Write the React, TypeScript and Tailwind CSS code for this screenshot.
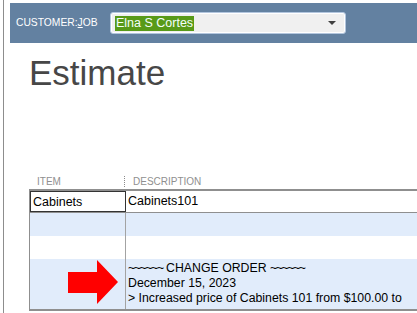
import React from 'react'

export default function App() {
  return (
    <div className="w-[417px] h-[313px] bg-white overflow-hidden font-['Liberation_Sans',Arial,sans-serif]">
      <div className="relative ml-[3px] h-full border-l border-[#8d8d8d] pt-[3px] pl-[6px]">
        {/* customer:job bar */}
        <div className="flex h-[40px] items-center bg-[#6381a1] pl-[6px]">
          <div className="w-[94px] shrink-0 text-[10.3px] text-white">
            CUSTOMER:<span className="underline">J</span>OB
          </div>
          <div className="flex h-[22px] w-[236px] items-center rounded-[3px] border border-[#b3c6de] bg-[#f0f0f0] pl-[4px] shadow-[inset_0_0_0_1px_#ffffff]">
            <span className="bg-[#589a18] px-[1px] text-[12.5px] leading-[15px] text-[#f4fffb]">Elna S Cortes</span>
            <span className="ml-auto mr-[9px] h-0 w-0 border-x-[4px] border-t-[4px] border-x-transparent border-t-[#404040]" />
          </div>
        </div>

        {/* title */}
        <h1 className="mt-[12px] pl-[19px] text-[35px] leading-none text-[#474747]">Estimate</h1>

        {/* column headers */}
        <div className="mt-[83px] flex h-[16px] items-center pl-[19px] text-[10px] text-[#8f8f8f]">
          <div className="w-[95px] pl-[8px]">ITEM</div>
          <div className="h-[11px] border-l border-dotted border-[#8a8a8a]" />
          <div className="pl-[8px]">DESCRIPTION</div>
        </div>

        {/* line items */}
        <div className="ml-[19px] border-y-2 border-l border-[#8f8f8f] text-black">
          <div className="flex h-[22px] border-b border-[#8f8f8f] bg-white">
            <div className="w-[96px] shrink-0 border border-[#333333] pl-[2px] text-[12.5px] leading-[20px]">Cabinets</div>
            <div className="pl-[2px] text-[12.5px] leading-[20px]">Cabinets101</div>
          </div>
          <div className="flex h-[23px] bg-[#e1ecfb]">
            <div className="w-[96px] shrink-0 border-r border-[#a3a3a3]" />
          </div>
          <div className="flex h-[23px] bg-white">
            <div className="w-[96px] shrink-0 border-r border-[#a3a3a3]" />
          </div>
          <div className="flex h-[50px] bg-[#e1ecfb]">
            <div className="w-[96px] shrink-0 border-r border-[#a3a3a3]" />
            <div className="whitespace-nowrap pl-[2px] pt-[2px] text-[12.3px] leading-[15px]">
              <div>
                <span className="tracking-[-1.4px]">~~~~~~</span> CHANGE ORDER <span className="tracking-[-1.4px]">~~~~~~</span>
              </div>
              <div>December 15, 2023</div>
              <div>&gt; Increased price of Cabinets 101 from $100.00 to</div>
            </div>
          </div>
        </div>

        {/* red arrow annotation */}
        <svg className="absolute left-[64px] top-[259px]" width="52" height="46" viewBox="0 0 52 46">
          <polygon points="0,13 29,13 29,1 50,23 29,45 29,34 0,34" fill="#ff0000" />
        </svg>
      </div>
    </div>
  )
}
